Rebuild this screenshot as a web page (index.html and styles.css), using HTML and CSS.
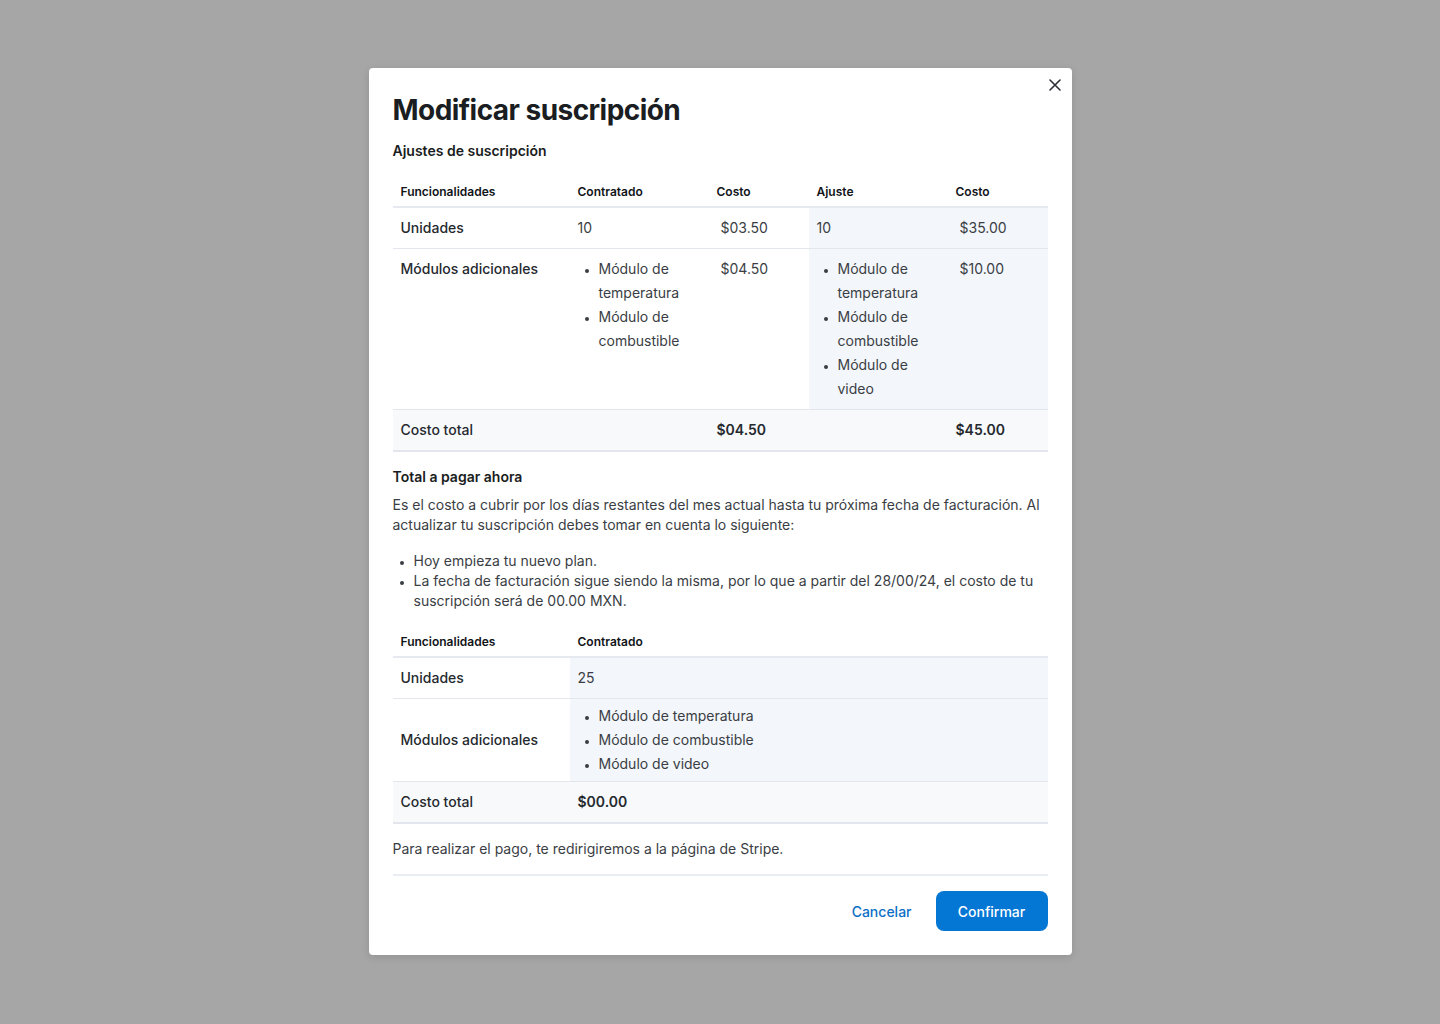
FILE: index.html
```html
<!DOCTYPE html>
<html lang="es">
  <head>
    <meta charset="UTF-8">
    <meta name="viewport" content="width=device-width, initial-scale=1.0">
    <title>Modificar suscripción</title>
    <link rel="stylesheet" href="styles.css">
  </head>
  <body>
    <div class="overlay">
      <div class="modal">
        <button class="close" type="button" aria-label="Cerrar">
          <svg width="14" height="14" viewBox="0 0 14 14"><path d="M2 2L12 12M12 2L2 12" stroke="#2b2f36" stroke-width="1.6" stroke-linecap="round"/></svg>
        </button>

        <h1 class="title">Modificar suscripción</h1>
        <h2 class="subtitle">Ajustes de suscripción</h2>

        <table class="plan-table">
          <colgroup>
            <col class="c-feat">
            <col class="c-hired">
            <col class="c-cost">
            <col class="c-adj">
            <col class="c-cost2">
          </colgroup>
          <thead>
            <tr>
              <th>Funcionalidades</th>
              <th>Contratado</th>
              <th>Costo</th>
              <th>Ajuste</th>
              <th>Costo</th>
            </tr>
          </thead>
          <tbody>
            <tr>
              <td class="label">Unidades</td>
              <td>10</td>
              <td class="price">$03.50</td>
              <td class="hl">10</td>
              <td class="hl price">$35.00</td>
            </tr>
            <tr>
              <td class="label">Módulos adicionales</td>
              <td>
                <ul class="modules">
                  <li>Módulo de temperatura</li>
                  <li>Módulo de combustible</li>
                </ul>
              </td>
              <td class="price">$04.50</td>
              <td class="hl">
                <ul class="modules">
                  <li>Módulo de temperatura</li>
                  <li>Módulo de combustible</li>
                  <li>Módulo de video</li>
                </ul>
              </td>
              <td class="hl price">$10.00</td>
            </tr>
            <tr class="total">
              <td class="label">Costo total</td>
              <td></td>
              <td><b>$04.50</b></td>
              <td></td>
              <td><b>$45.00</b></td>
            </tr>
          </tbody>
        </table>

        <h2 class="subtitle pay-title">Total a pagar ahora</h2>
        <p class="text">Es el costo a cubrir por los días restantes del mes actual hasta tu próxima fecha de facturación. Al actualizar tu suscripción debes tomar en cuenta lo siguiente:</p>
        <ul class="notes">
          <li>Hoy empieza tu nuevo plan.</li>
          <li>La fecha de facturación sigue siendo la misma, por lo que a partir del 28/00/24, el costo de tu suscripción será de 00.00 MXN.</li>
        </ul>

        <table class="plan-table now-table">
          <colgroup>
            <col class="c-feat">
            <col>
          </colgroup>
          <thead>
            <tr>
              <th>Funcionalidades</th>
              <th>Contratado</th>
            </tr>
          </thead>
          <tbody>
            <tr>
              <td class="label">Unidades</td>
              <td class="hl">25</td>
            </tr>
            <tr class="tight">
              <td class="label mid">Módulos adicionales</td>
              <td class="hl">
                <ul class="modules">
                  <li>Módulo de temperatura</li>
                  <li>Módulo de combustible</li>
                  <li>Módulo de video</li>
                </ul>
              </td>
            </tr>
            <tr class="total">
              <td class="label">Costo total</td>
              <td><b>$00.00</b></td>
            </tr>
          </tbody>
        </table>

        <p class="text stripe">Para realizar el pago, te redirigiremos a la página de Stripe.</p>

        <div class="footer">
          <button class="btn btn-link" type="button">Cancelar</button>
          <button class="btn btn-primary" type="button">Confirmar</button>
        </div>
      </div>
    </div>
  </body>
</html>
```

FILE: styles.css
```css
* {
  box-sizing: border-box;
}

body {
  margin: 0;
  background-color: #a6a6a6;
  font-family: Inter, "Noto Sans", Arial, sans-serif;
  color: #1d2126;
}

.overlay {
  min-height: 1024px;
  display: flex;
  justify-content: center;
  align-items: flex-start;
  padding-top: 68px;
}

.modal {
  position: relative;
  width: 703px;
  background: #ffffff;
  border-radius: 4px;
  padding: 24px 24px 24px;
  box-shadow: 0 2px 8px rgba(0, 0, 0, 0.12);
}

.close {
  position: absolute;
  top: 9px;
  right: 9px;
  width: 15px;
  height: 15px;
  padding: 0;
  border: none;
  background: none;
  display: flex;
  align-items: center;
  justify-content: center;
}

.title {
  margin: 0;
  font-size: 28px;
  line-height: 36px;
  font-weight: 700;
  color: #1a1d21;
  letter-spacing: -0.55px;
}

.subtitle {
  margin: 13px 0 0;
  font-size: 14px;
  line-height: 20px;
  font-weight: 600;
  color: #1a1d21;
}

.plan-table {
  width: 100%;
  margin-top: 17px;
  border-collapse: collapse;
  table-layout: fixed;
  font-size: 14px;
}

.c-feat { width: 177px; }
.c-hired { width: 139px; }
.c-cost { width: 100px; }
.c-adj { width: 139px; }
.c-cost2 { width: 100px; }

.plan-table th {
  text-align: left;
  font-size: 12px;
  line-height: 16px;
  font-weight: 600;
  color: #111418;
  padding: 6px 8px;
  border-bottom: 2px solid #e6e9ef;
}

.plan-table td {
  padding: 8px 8px;
  line-height: 24px;
  vertical-align: top;
  color: #3a3e44;
  border-bottom: 1px solid #e3e7ed;
}

.plan-table td.label {
  font-weight: 500;
  color: #25292e;
}

.plan-table td.price {
  padding-left: 12px;
}

.plan-table td.hl {
  background: #f3f6fb;
}

.plan-table tr.total td {
  background: #f7f9fb;
  border-bottom-width: 2px;
}

.plan-table tr.total b {
  font-weight: 600;
  color: #25292e;
}

.plan-table tr.tight td {
  padding-top: 5px;
  padding-bottom: 5px;
}

.plan-table td.mid {
  vertical-align: middle;
}

.modules {
  margin: 0;
  padding-left: 21px;
}

.modules li {
  line-height: 24px;
}

.modules li::marker {
  font-size: 11px;
}

.pay-title {
  margin-top: 15px;
}

.text {
  margin: 8px 0 0;
  font-size: 14px;
  line-height: 20px;
  color: #3a3e44;
}

.notes {
  margin: 16px 0 0;
  padding-left: 21px;
  font-size: 14px;
  line-height: 20px;
  color: #3a3e44;
}

.notes li::marker {
  font-size: 11px;
}

.now-table {
  margin-top: 17px;
}

.stripe {
  margin-top: 15px;
  padding-bottom: 15px;
  border-bottom: 2px solid #e9ecf0;
}

.footer {
  display: flex;
  justify-content: flex-end;
  gap: 8px;
  margin-top: 15px;
}

.btn {
  height: 40px;
  border: none;
  border-radius: 8px;
  font-family: inherit;
  font-size: 14px;
  font-weight: 500;
  padding: 0 16px;
  cursor: pointer;
}

.btn-link {
  background: none;
  color: #0b6fc7;
}

.btn-primary {
  width: 112px;
  background: #0477d4;
  color: #ffffff;
}
```
